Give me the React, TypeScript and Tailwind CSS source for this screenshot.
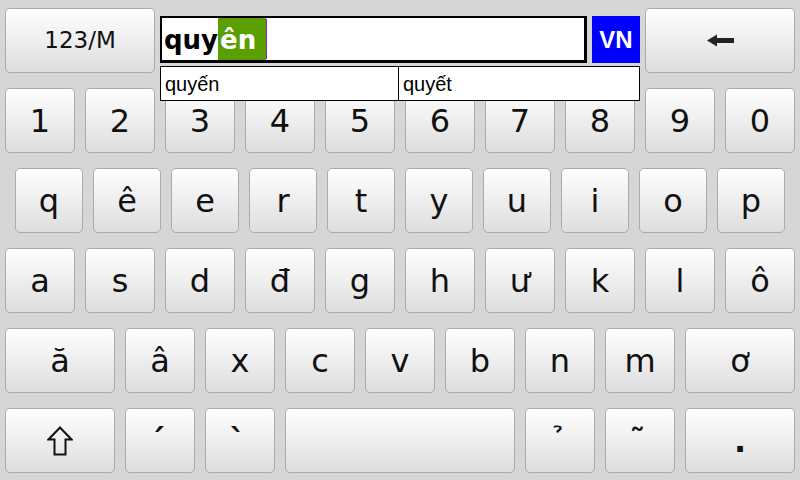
import type { ReactNode } from "react";

const KEY =
  "h-[65px] shrink-0 rounded-[5px] border border-[#ababab] bg-linear-to-b from-[#ffffff] via-[#efeeef] to-[#dedddf] flex items-center justify-center text-[#111] font-['DejaVu_Sans',sans-serif]";

function Key({ w, children, text = "text-[32px]" }: { w: string; children?: ReactNode; text?: string }) {
  return <div className={`${KEY} ${w} ${text}`}>{children}</div>;
}

const numbers = ["1", "2", "3", "4", "5", "6", "7", "8", "9", "0"];
const row2 = ["q", "ê", "e", "r", "t", "y", "u", "i", "o", "p"];
const row3 = ["a", "s", "d", "đ", "g", "h", "ư", "k", "l", "ô"];
const row4 = ["x", "c", "v", "b", "n", "m"];

function ShiftIcon() {
  return (
    <svg width="26" height="30" viewBox="0 0 26 30">
      <path d="M13 1.5 L24.5 13.5 L18.5 13.5 L18.5 28.5 L7.5 28.5 L7.5 13.5 L1.5 13.5 Z" fill="none" stroke="#111" strokeWidth="2" strokeLinejoin="miter" />
    </svg>
  );
}

function BackIcon() {
  return (
    <svg width="27" height="13" viewBox="0 0 27 13">
      <path d="M0 6.5 L10 0.5 L10 12.5 Z" fill="#222" />
      <rect x="9" y="4" width="18" height="5" fill="#222" />
    </svg>
  );
}

// tone mark keys draw the combining marks on a no-break space
function Tone({ mark }: { mark: string }) {
  return <span className="font-bold leading-none">{"\u00A0" + mark}</span>;
}

export default function App() {
  return (
    <div className="w-[800px] h-[480px] bg-[#d6d6d6] pt-[8px] flex flex-col gap-[15px] overflow-hidden">
      {/* top row: mode key, composition field, backspace */}
      <div className="flex gap-[5px] px-[5px] relative z-10">
        <Key w="w-[150px]" text="text-[23px]">123/M</Key>
        <div className="w-[480px] h-[65px] relative pt-[8px]">
          <div className="flex gap-[5px]">
            <div className="w-[427px] h-[47px] bg-white border-2 border-black border-b-[3px] border-r-[3px] flex items-stretch pl-[2px] font-['DejaVu_Sans',sans-serif] font-bold text-[26px]">
              <span className="flex items-center pt-[3px] text-black">quy</span>
              <span className="flex items-center pt-[3px] bg-[#5a9e00] text-white pl-[2px] pr-[10px]">ên</span>
              <span className="w-px my-px bg-[#7a2bd6]" />
            </div>
            <div className="w-[48px] h-[47px] bg-[#0000ff] text-white font-bold text-[24px] flex items-center justify-center font-['Liberation_Sans',sans-serif]">
              VN
            </div>
          </div>
          <div className="absolute left-0 top-[58px] w-[480px] h-[35px] bg-white border border-black flex font-['Liberation_Sans',sans-serif] text-[20px] text-black">
            <div className="w-[238px] border-r border-black pl-[4px] flex items-center">quyến</div>
            <div className="flex-1 pl-[4px] flex items-center">quyết</div>
          </div>
        </div>
        <Key w="w-[150px]">
          <BackIcon />
        </Key>
      </div>

      <div className="flex gap-[10px] px-[5px]">
        {numbers.map((k) => (
          <Key key={k} w="w-[70px]">{k}</Key>
        ))}
      </div>

      <div className="flex gap-[10px] pl-[15px]">
        {row2.map((k) => (
          <Key key={k} w="w-[68px]">{k}</Key>
        ))}
      </div>

      <div className="flex gap-[10px] px-[5px]">
        {row3.map((k) => (
          <Key key={k} w="w-[70px]">{k}</Key>
        ))}
      </div>

      <div className="flex gap-[10px] px-[5px]">
        <Key w="w-[110px]">ă</Key>
        <Key w="w-[70px]">â</Key>
        {row4.map((k) => (
          <Key key={k} w="w-[70px]">{k}</Key>
        ))}
        <Key w="w-[110px]">ơ</Key>
      </div>

      <div className="flex gap-[10px] px-[5px]">
        <Key w="w-[110px]">
          <ShiftIcon />
        </Key>
        <Key w="w-[70px]">
          <Tone mark={"\u0301"} />
        </Key>
        <Key w="w-[70px]">
          <Tone mark={"\u0300"} />
        </Key>
        <Key w="w-[230px]" />
        <Key w="w-[70px]">
          <Tone mark={"\u0309"} />
        </Key>
        <Key w="w-[70px]">
          <Tone mark={"\u0303"} />
        </Key>
        <Key w="w-[110px]">
          <span className="font-bold leading-none">.</span>
        </Key>
      </div>
    </div>
  );
}
